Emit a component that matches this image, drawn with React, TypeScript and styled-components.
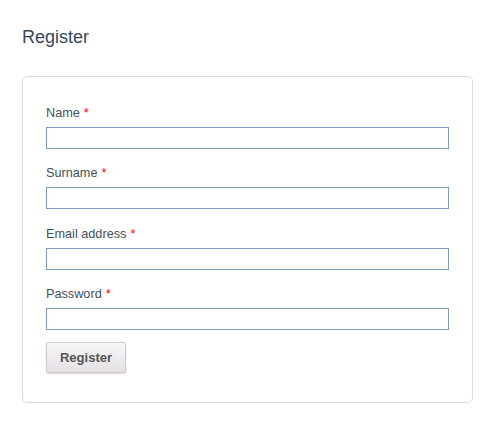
import React, {useState} from "react";
import styled, {createGlobalStyle} from "styled-components";

const GlobalStyle = createGlobalStyle`
  html, body {
    margin: 0;
    padding: 0;
    background: #fff;
  }
  body {
    font-family: "Liberation Sans", Arial, sans-serif;
  }
`;

const Page = styled.div`
  padding: 27px 27px 0 22px;
  width: 500px;
  box-sizing: border-box;
`;

const Title = styled.h1`
  margin: 0 0 29px 0;
  font-size: 18px;
  line-height: 20px;
  font-weight: normal;
  color: #34495e;
`;

const Card = styled.form`
  box-sizing: border-box;
  width: 451px;
  border: 1px solid #dedbdd;
  border-radius: 5px;
  padding: 28px 23px 29px 23px;
`;

const Field = styled.div`
  display: flex;
  flex-direction: column;
  margin-bottom: 16.3px;
  &:last-of-type {
    margin-bottom: 12px;
  }
`;

const Label = styled.label`
  font-size: 12.7px;
  line-height: 16px;
  color: #44505e;
  margin-bottom: 6px;
`;

const Required = styled.span`
  color: #f00;
  margin-left: 4px;
`;

const Input = styled.input`
  box-sizing: border-box;
  width: 100%;
  height: 22px;
  margin: 0;
  border: 1px solid #7f9db9;
  border-radius: 0;
  padding: 2px 4px;
  font-family: "Liberation Sans", Arial, sans-serif;
  font-size: 13px;
  outline: none;
`;

const Button = styled.button`
  box-sizing: border-box;
  width: 80px;
  height: 31px;
  border: 1px solid #cfcacf;
  border-radius: 2px;
  background: linear-gradient(#f8f7f8, #e4e0e4);
  box-shadow: 0 1px 2px rgba(0, 0, 0, 0.15);
  color: #555;
  font-family: "Liberation Sans", Arial, sans-serif;
  font-size: 13px;
  font-weight: bold;
  cursor: pointer;
  display: block;
`;

const fields = [
  {name: "name", label: "Name", type: "text"},
  {name: "surname", label: "Surname", type: "text"},
  {name: "email", label: "Email address", type: "email"},
  {name: "password", label: "Password", type: "password"},
];

export default function App() {
  const [values, setValues] = useState<Record<string, string>>({});

  const handleChange = (e: React.ChangeEvent<HTMLInputElement>) => {
    const {name, value} = e.target;
    setValues(prev => ({...prev, [name]: value}));
  };

  return (
    <>
      <GlobalStyle/>
      <Page>
        <Title>Register</Title>
        <Card onSubmit={e => e.preventDefault()}>
          {fields.map(f => (
            <Field key={f.name}>
              <Label htmlFor={f.name}>
                {f.label}<Required>*</Required>
              </Label>
              <Input id={f.name} name={f.name} type={f.type} value={values[f.name] || ""} onChange={handleChange}/>
            </Field>
          ))}
          <Button type="submit">Register</Button>
        </Card>
      </Page>
    </>
  );
}
